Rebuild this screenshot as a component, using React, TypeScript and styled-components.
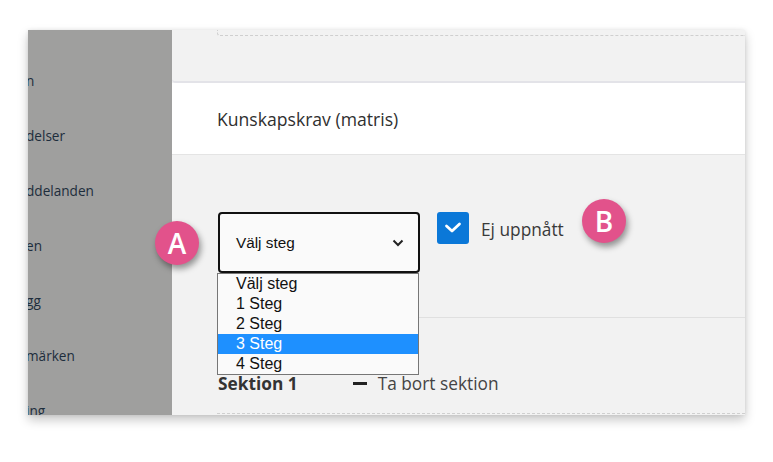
import styled, { createGlobalStyle } from 'styled-components'

const GlobalStyle = createGlobalStyle`
  html, body {
    margin: 0;
    padding: 0;
    background: #ffffff;
    font-family: 'Open Sans', 'Liberation Sans', sans-serif;
  }
`

const Page = styled.div`
  width: 773px;
  height: 462px;
  padding: 30px 28px 0 28px;
  box-sizing: border-box;
  position: relative;
`

const Frame = styled.div`
  width: 717px;
  height: 385px;
  display: flex;
  overflow: hidden;
  box-shadow: 0 5px 10px rgba(0, 0, 0, 0.22), 0 0 4px rgba(0, 0, 0, 0.08);
`

const Sidebar = styled.nav`
  width: 144px;
  flex-shrink: 0;
  background: #9f9f9e;
  padding-top: 23px;
  box-sizing: border-box;
  overflow: hidden;
`

const NavItem = styled.div`
  height: 55px;
  display: flex;
  align-items: center;
  margin-left: -2px;
  font-size: 13.6px;
  color: #1d2d3c;
  white-space: nowrap;
`

const Main = styled.main`
  flex: 1;
  background: #f2f2f2;
  display: flex;
  flex-direction: column;
  min-width: 0;
`

const TopCard = styled.div`
  height: 51px;
  border-bottom: 2px solid #e3e3e8;
  border-bottom-left-radius: 4px;
  background: #f2f2f2;
  flex-shrink: 0;
`

const DashedBox = styled.div`
  height: 5px;
  margin-left: 45px;
  border-left: 1px dashed #cfcfcf;
  border-bottom: 1px dashed #cfcfcf;
  border-bottom-left-radius: 3px;
`

const Header = styled.div`
  height: 71px;
  background: #ffffff;
  border-bottom: 1px solid #e4e4e4;
  display: flex;
  align-items: center;
  padding-left: 45px;
  font-size: 17.6px;
  color: #2f2f2f;
  flex-shrink: 0;
`

const Body = styled.div`
  padding-left: 45px;
  display: flex;
  flex-direction: column;
`

const Controls = styled.div`
  display: flex;
  align-items: flex-start;
  padding-top: 57px;
  padding-bottom: 44px;
  border-bottom: 1px solid #e0e0e0;
`

const SelectWrap = styled.div`
  position: relative;
  margin-left: 1px;
`

const SelectBox = styled.div`
  width: 202px;
  height: 61px;
  box-sizing: border-box;
  border: 2px solid #111111;
  border-radius: 4px;
  background: #fafafa;
  display: flex;
  align-items: center;
  justify-content: space-between;
  padding: 0 14px 0 16px;
  font-family: 'Liberation Sans', Arial, sans-serif;
  font-size: 15.3px;
  color: #111111;
`

const OptionList = styled.ul`
  position: absolute;
  top: 61px;
  left: -1px;
  width: 202px;
  margin: 0;
  padding: 0;
  list-style: none;
  box-sizing: border-box;
  border: 1px solid #767676;
  background: #fafafa;
  font-family: 'Liberation Sans', Arial, sans-serif;
  font-size: 16px;
  z-index: 2;
`

const Option = styled.li<{ $active?: boolean }>`
  height: 20px;
  line-height: 20px;
  padding-left: 18px;
  background: ${p => (p.$active ? '#1e90ff' : 'transparent')};
  color: ${p => (p.$active ? '#ffffff' : '#111111')};
`

const CheckRow = styled.label`
  display: flex;
  align-items: center;
  margin-left: 17px;
  gap: 12px;
  font-size: 17.3px;
  color: #3a3a3a;
`

const CheckBox = styled.span`
  width: 32px;
  height: 32px;
  border-radius: 3px;
  background: #0b78d8;
  display: flex;
  align-items: center;
  justify-content: center;
`

const CheckText = styled.span`
  margin-top: 2px;
`

const SectionRow = styled.div`
  display: flex;
  align-items: center;
  height: 22px;
  margin-top: 54px;
  margin-bottom: 19px;
  margin-left: 1px;
  font-size: 17.3px;
  color: #333333;
`

const SectionTitle = styled.span`
  font-weight: 700;
  color: #333333;
`

const RemoveButton = styled.span`
  display: flex;
  align-items: center;
  gap: 11px;
  margin-left: 55px;
  color: #444444;
`

const Minus = styled.span`
  width: 14px;
  height: 3px;
  background: #222222;
`

const DashedLine = styled.div`
  border-top: 1px dashed #cfcfcf;
`

const Badge = styled.div<{ $x: number; $y: number }>`
  position: absolute;
  left: ${p => p.$x - 22}px;
  top: ${p => p.$y - 22}px;
  width: 44px;
  height: 44px;
  border-radius: 50%;
  background: #e2528b;
  color: #ffffff;
  font-size: 28px;
  font-weight: 600;
  display: flex;
  align-items: center;
  justify-content: center;
  box-shadow: 2px 4px 6px rgba(0, 0, 0, 0.4);
  z-index: 3;
`

const navItems = ['n', 'delser', 'ddelanden', 'en', 'gg', 'märken', 'ing']
const options = ['Välj steg', '1 Steg', '2 Steg', '3 Steg', '4 Steg']

export default function App() {
  return (
    <Page>
      <GlobalStyle />
      <Frame>
        <Sidebar>
          {navItems.map(item => (
            <NavItem key={item}>{item}</NavItem>
          ))}
        </Sidebar>
        <Main>
          <TopCard>
            <DashedBox />
          </TopCard>
          <Header>Kunskapskrav (matris)</Header>
          <Body>
            <Controls>
              <SelectWrap>
                <SelectBox>
                  <span>Välj steg</span>
                  <svg width="12" height="8" viewBox="0 0 12 8">
                    <polyline
                      points="1.5,1.5 6,6 10.5,1.5"
                      fill="none"
                      stroke="#222"
                      strokeWidth="2"
                    />
                  </svg>
                </SelectBox>
                <OptionList>
                  {options.map(o => (
                    <Option key={o} $active={o === '3 Steg'}>
                      {o}
                    </Option>
                  ))}
                </OptionList>
              </SelectWrap>
              <CheckRow>
                <CheckBox>
                  <svg width="18" height="12" viewBox="0 0 18 12">
                    <polyline
                      points="2.5,4 8,9 15.5,2"
                      fill="none"
                      stroke="#fff"
                      strokeWidth="2.8"
                      strokeLinecap="round"
                      strokeLinejoin="round"
                    />
                  </svg>
                </CheckBox>
                <CheckText>Ej uppnått</CheckText>
              </CheckRow>
            </Controls>
            <SectionRow>
              <SectionTitle>Sektion 1</SectionTitle>
              <RemoveButton>
                <Minus />
                Ta bort sektion
              </RemoveButton>
            </SectionRow>
            <DashedLine />
          </Body>
        </Main>
      </Frame>
      <Badge $x={177} $y={243}>A</Badge>
      <Badge $x={604} $y={221}>B</Badge>
    </Page>
  )
}
